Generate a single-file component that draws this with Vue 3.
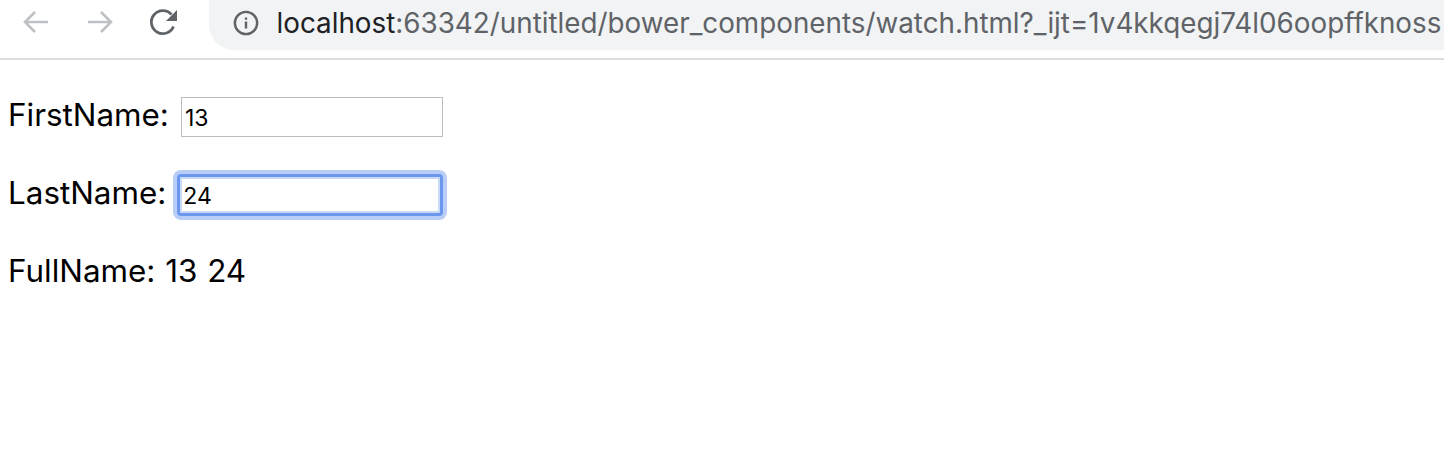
<template>
  <div class="page">
    <header class="toolbar">
      <nav class="nav-icons">
        <svg class="icon" viewBox="0 0 32 32" width="32" height="32">
          <path d="M28 16H5M15 6 5 16l10 10" class="arrow" />
        </svg>
        <svg class="icon" viewBox="0 0 32 32" width="32" height="32">
          <path d="M4 16h23M17 6l10 10-10 10" class="arrow" />
        </svg>
        <svg class="icon" viewBox="0 0 32 32" width="32" height="32">
          <path d="M25.5 20.5a11.5 11.5 0 1 1-2-12" class="reload" />
          <path d="M29 4v11H18z" fill="#5f6368" />
        </svg>
      </nav>
      <div class="omnibox">
        <svg class="info" viewBox="0 0 28 28" width="26" height="26">
          <circle cx="14" cy="14" r="12" fill="none" stroke="#5f6368" stroke-width="2.6" />
          <path d="M14 12.5v7.5M14 8v2.4" stroke="#5f6368" stroke-width="2.6" fill="none" />
        </svg>
        <span class="url"><span class="host">localhost</span>:63342/untitled/bower_components/watch.html?_ijt=1v4kkqegj74l06oopffknoss</span>
      </div>
    </header>
    <main class="content">
      <div class="row">
        <label class="label first">FirstName:</label>
        <input class="field" type="text" v-model="firstName" />
      </div>
      <div class="row">
        <label class="label last">LastName:</label>
        <input class="field focused" type="text" v-model="lastName" />
      </div>
      <p class="full">FullName: {{ firstName }} {{ lastName }}</p>
    </main>
  </div>
</template>

<script setup>
import { ref } from 'vue';

const firstName = ref('13');
const lastName = ref('24');
</script>

<style>
html, body {
  margin: 0;
  background: #fff;
}
</style>

<style scoped>
.page {
  height: 470px;
  overflow: hidden;
  font-family: Inter, "Liberation Sans", sans-serif;
  color: #000;
  background: #fff;
}
.toolbar {
  display: flex;
  height: 58px;
  border-bottom: 2px solid #dadce0;
}
.nav-icons {
  display: flex;
  align-items: center;
  gap: 32px;
  padding: 0 29px 14px 20px;
  flex: none;
}
.arrow {
  fill: none;
  stroke: #bdc1c6;
  stroke-width: 2.6;
}
.reload {
  fill: none;
  stroke: #5f6368;
  stroke-width: 2.8;
}
.omnibox {
  box-sizing: border-box;
  flex: 1;
  min-width: 0;
  height: 50px;
  display: flex;
  align-items: center;
  gap: 18px;
  padding: 0 0 5px 23.5px;
  background: #f1f3f4;
  border-bottom-left-radius: 25px;
  overflow: hidden;
}
.info {
  flex: none;
}
.url {
  font-size: 27.8px;
  color: #5f6368;
  white-space: nowrap;
}
.host {
  color: #202124;
}
.content {
  padding: 37px 0 0 8px;
}
.row {
  display: flex;
  align-items: center;
  height: 40px;
  margin-bottom: 38px;
}
.label {
  font-size: 31.4px;
  line-height: 36px;
  padding-bottom: 5px;
}
.first {
  margin-right: 12px;
}
.last {
  margin-right: 11px;
}
.field {
  box-sizing: border-box;
  flex: none;
  width: 262px;
  height: 40px;
  padding: 2px 3px 0;
  border: 1px solid #bdbdbd;
  border-radius: 0;
  outline: none;
  font-family: inherit;
  font-size: 23px;
  color: #000;
  background: #fff;
}
.focused {
  width: 266px;
  height: 42px;
  padding-left: 3px;
  border: 3px solid #6b97ef;
  border-radius: 4px;
  box-shadow: 0 0 0 4px #b9cef6, inset 0 0 0 2px #c9daf9;
}
.full {
  margin: 0;
  font-size: 31.4px;
  line-height: 36px;
  word-spacing: 1px;
}
</style>
